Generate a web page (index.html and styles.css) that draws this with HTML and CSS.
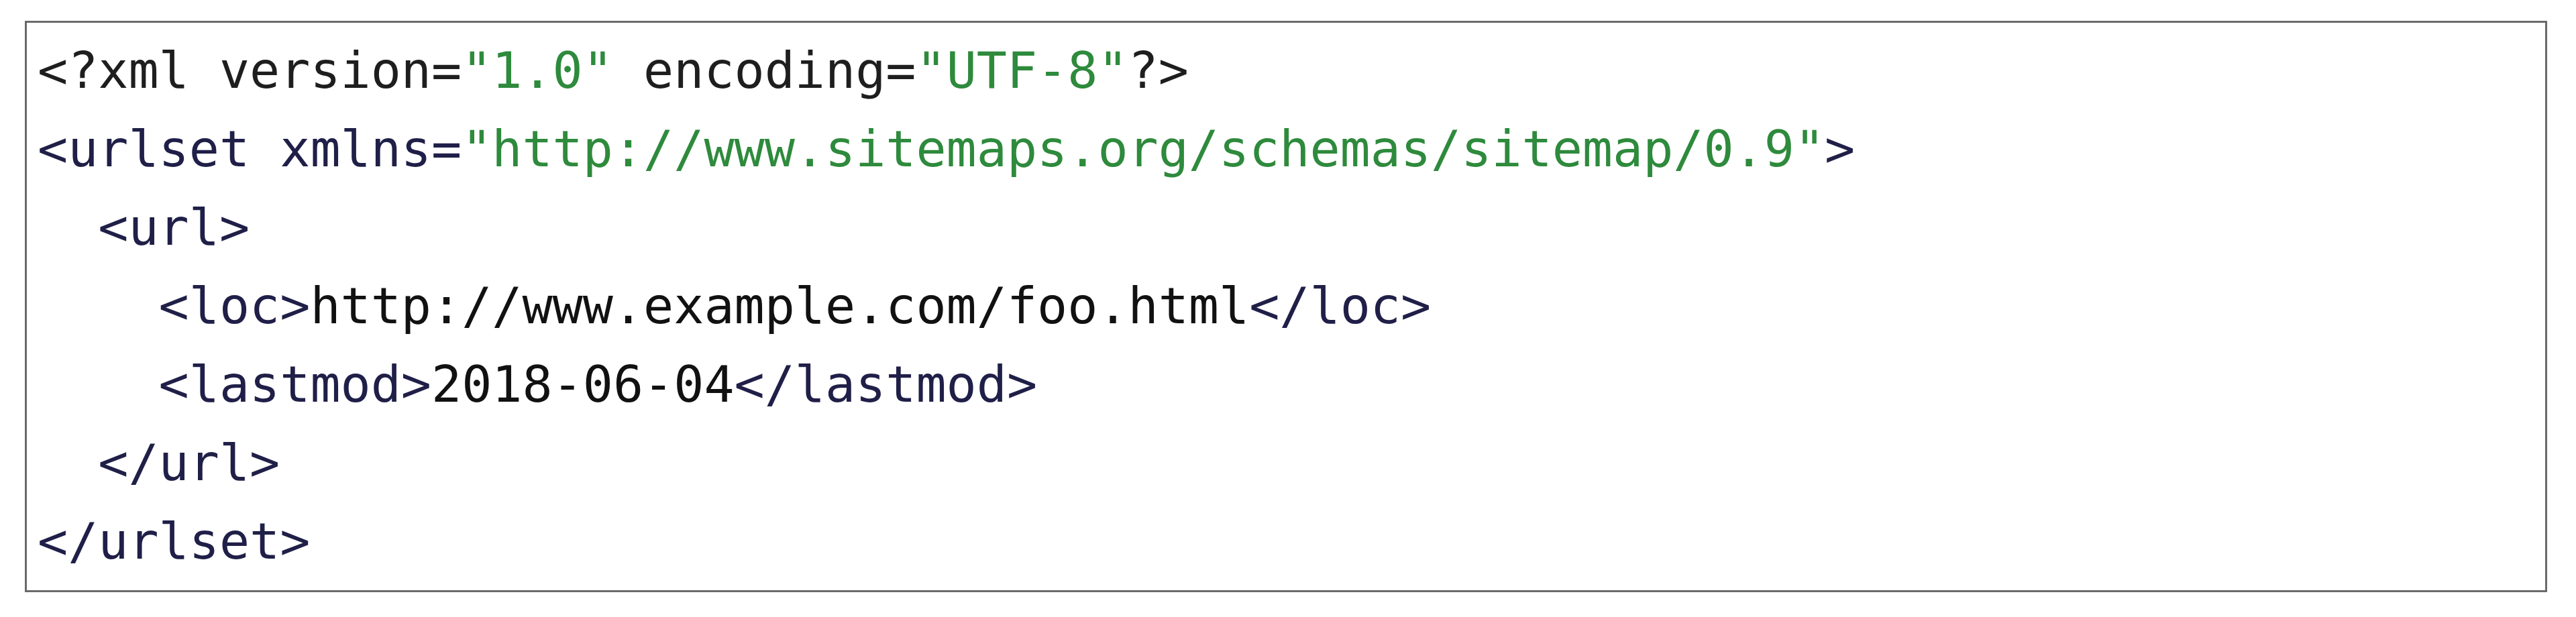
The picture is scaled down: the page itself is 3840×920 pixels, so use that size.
FILE: index.html
```html
<!DOCTYPE html>
<html lang="en">
<head>
<meta charset="utf-8">
<title>Sitemap XML</title>
<link rel="stylesheet" href="styles.css">
</head>
<body>
<div class="page">
<pre class="code"><span class="plain">&lt;?xml version=</span><span class="val">"1.0"</span><span class="plain"> encoding=</span><span class="val">"UTF-8"</span><span class="plain">?&gt;</span>
<span class="tag">&lt;urlset xmlns=</span><span class="val">"http://www.sitemaps.org/schemas/sitemap/0.9"</span><span class="tag">&gt;</span>
<span class="tag">  &lt;url&gt;</span>
<span class="tag">    &lt;loc&gt;</span><span class="text">http://www.example.com/foo.html</span><span class="tag">&lt;/loc&gt;</span>
<span class="tag">    &lt;lastmod&gt;</span><span class="text">2018-06-04</span><span class="tag">&lt;/lastmod&gt;</span>
<span class="tag">  &lt;/url&gt;</span>
<span class="tag">&lt;/urlset&gt;</span></pre>
</div>
</body>
</html>
```

FILE: styles.css
```css
html, body {
  margin: 0;
  padding: 0;
  background: #ffffff;
}

.page {
  padding: 31px 43px 0 37px;
}

.code {
  margin: 0;
  box-sizing: border-box;
  height: 852px;
  border: 3px solid #6a6a6a;
  padding: 13px 16px 14px 16px;
  font-family: "DejaVu Sans Mono", "Liberation Mono", monospace;
  font-size: 75px;
  line-height: 117px;
  white-space: pre;
  color: #1c1c1c;
  background: #ffffff;
}

.plain { color: #1e1e1e; }
.tag { color: #1f1f48; }
.text { color: #111111; }
.val { color: #2e8a3c; }
```
